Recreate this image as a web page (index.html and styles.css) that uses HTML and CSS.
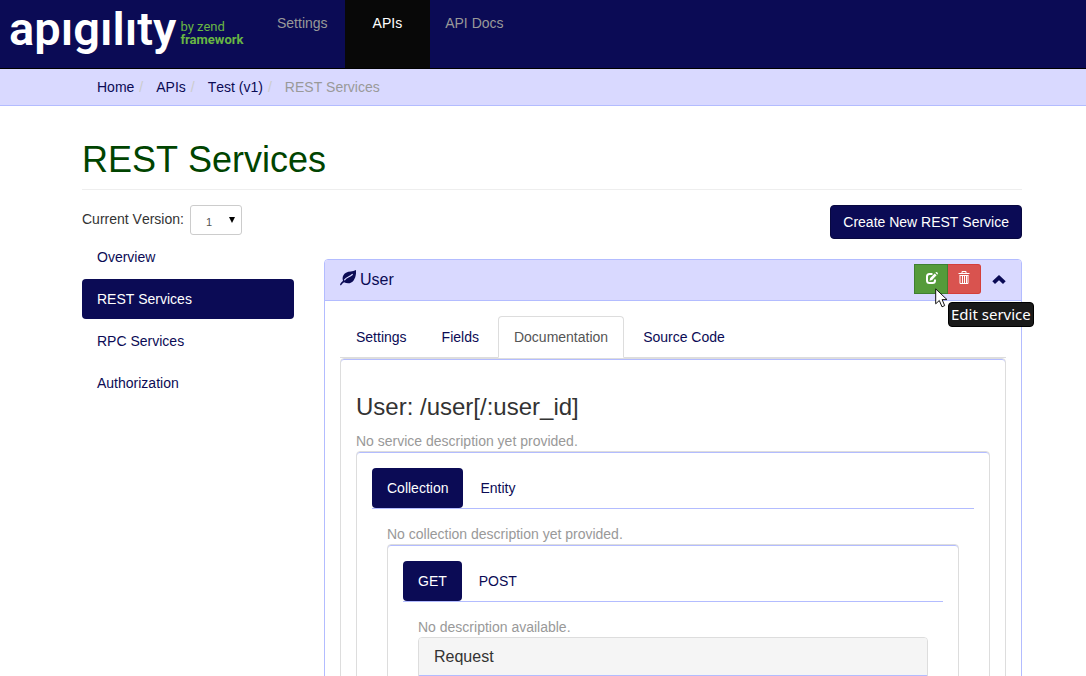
FILE: index.html
```html
<!DOCTYPE html>
<html lang="en">
<head>
<meta charset="utf-8">
<title>Apigility - REST Services</title>
<link rel="stylesheet" href="styles.css">
</head>
<body>
<header class="navbar">
  <a class="brand" href="#" aria-label="apigility by zend framework">
    <span class="brand-name">apıgılıty</span>
    <span class="brand-by"><span>by zend</span><strong>framework</strong></span>
  </a>
  <nav class="main-nav">
    <a href="#">Settings</a>
    <a class="active" href="#">APIs</a>
    <a href="#">API Docs</a>
  </nav>
</header>
<ol class="breadcrumb">
  <li><a href="#">Home</a></li>
  <li><a href="#">APIs</a></li>
  <li><a href="#">Test (v1)</a></li>
  <li class="current">REST Services</li>
</ol>
<main class="container">
  <h1>REST Services</h1>
  <div class="columns">
    <aside>
      <div class="version">
        <label for="version">Current Version:</label>
        <span class="select-wrap"><select id="version"><option>1</option></select></span>
      </div>
      <nav class="side-nav">
        <a href="#">Overview</a>
        <a class="active" href="#">REST Services</a>
        <a href="#">RPC Services</a>
        <a href="#">Authorization</a>
      </nav>
    </aside>
    <section class="services">
      <button class="create" type="button">Create New REST Service</button>
      <article class="service">
        <header class="service-head">
          <a class="service-name" href="#">
            <svg class="leaf" viewBox="0 0 16 16" aria-hidden="true"><path fill="currentColor" d="M16 0C12.500 1.800 9 1 6 2.700C3 4.400 1.900 7.500 3 10.800C1.700 12 .600 13.200 0 14.800L.800 15.600C1.600 14.300 2.700 13 4 12.200C7.500 14.200 11.500 13.500 13.600 10.500C15.700 7.500 16.300 4 16 0Z"/><path fill="none" stroke="#d9d9ff" stroke-width="1.200" stroke-linecap="round" d="M4.600 9.800C6.500 7 9.500 7.300 12.300 4.500"/></svg>
            User
          </a>
          <div class="actions">
            <button class="edit" type="button" aria-label="Edit service"><svg viewBox="0 0 13 13" aria-hidden="true"><path fill="none" stroke="currentColor" stroke-width="2" d="M7.500 2H4.500Q2 2 2 4.500V8.500Q2 11 4.500 11H7.500Q10 11 10 8.500V7.500"/><path fill="currentColor" d="M4.500 8.700L5.200 5.900L9.700 1.400L11.600 3.300L7.100 7.900ZM10.400.800L11.100.100Q13 .300 13 1.900L12.300 2.600Z"/></svg></button>
            <button class="delete" type="button" aria-label="Delete service"><svg viewBox="0 0 12 14" aria-hidden="true"><path fill="none" stroke="currentColor" d="M.500 2.500H11.500M4 2V.500H8V2M1.500 4.500H10.500M2 4.500V12.500H10V4.500M4.500 5V12M6.500 5V12M8.500 5V12"/></svg></button>
            <svg class="pointer" viewBox="0 0 13 20" aria-hidden="true"><path fill="#fff" stroke="#111" d="M.700.900V15.800L4.300 12.500L7 18.800L9.700 17.600L7.100 11.600H12Z"/></svg>
            <span class="tooltip" role="tooltip">Edit service</span>
          </div>
          <button class="collapse" type="button" aria-label="Collapse"><svg viewBox="0 0 14 10" aria-hidden="true"><path fill="currentColor" d="M7 0L13.700 6.300L11 9L7 5.200L3 9L.300 6.300Z"/></svg></button>
        </header>
        <div class="service-body">
          <nav class="tabs">
            <a href="#">Settings</a>
            <a href="#">Fields</a>
            <a class="active" href="#">Documentation</a>
            <a href="#">Source Code</a>
          </nav>
          <div class="panel">
            <h2>User: /user[/:user_id]</h2>
            <p>No service description yet provided.</p>
            <div class="panel">
              <nav class="pills">
                <a class="active" href="#">Collection</a>
                <a href="#">Entity</a>
              </nav>
              <div class="pane">
                <p>No collection description yet provided.</p>
                <div class="panel">
                  <nav class="pills">
                    <a class="active" href="#">GET</a>
                    <a href="#">POST</a>
                  </nav>
                  <div class="pane">
                    <p>No description available.</p>
                    <div class="request"><h3>Request</h3></div>
                  </div>
                </div>
              </div>
            </div>
          </div>
        </div>
      </article>
    </section>
  </div>
</main>
</body>
</html>
```
FILE: styles.css
```css
* { box-sizing: border-box; }
html { scrollbar-width: none; }
body {
  margin: 0;
  background: #fff;
  color: #333;
  font: 14px/20px "Liberation Sans", Arial, sans-serif;
  font-kerning: none;
}
a { color: #0b0b55; text-decoration: none; }
h1, h2, h3, p, ol { margin: 0; padding: 0; font-weight: 400; }
button, select { font: inherit; font-kerning: none; cursor: pointer; }
svg { display: block; }

.navbar {
  display: flex;
  height: 69px;
  background: #0b0b55;
  border-bottom: 1px solid #000;
}
.brand {
  display: flex;
  width: 262px;
  padding-left: 9px;
  gap: 4px;
  color: #fff;
}
.brand-name { font: 600 47px/58px Roboto, sans-serif; }
.brand-by {
  display: flex;
  flex-direction: column;
  padding-top: 20px;
  color: #68b643;
  font: 13px/13px Roboto, sans-serif;
}
.brand-by strong { font-weight: 700; }
.main-nav { display: flex; }
.main-nav a { padding: 13px 17px 0 15px; color: #999; }
.main-nav .active { padding: 13px 28px 0; background: #080808; color: #fff; }
.main-nav a:last-child { padding-right: 15px; }

.breadcrumb {
  display: flex;
  padding: 8px 97px;
  background: #d9d9ff;
  border-bottom: 1px solid #b3bcff;
  list-style: none;
}
.breadcrumb li + li::before { content: "/"; padding: 0 13px 0 5px; color: #ccc; }
.breadcrumb .current { color: #999; }

.container { padding: 34px 64px 0 82px; }
h1 {
  margin-bottom: 15px;
  padding-bottom: 9px;
  border-bottom: 1px solid #eee;
  color: #040;
  font-size: 36px;
  line-height: 40px;
}
.columns { display: grid; grid-template-columns: 212px minmax(0, 1fr); gap: 30px; }

.version { display: flex; gap: 6px; height: 32px; line-height: 28px; }
.select-wrap { position: relative; height: 30px; }
.select-wrap::after {
  content: "";
  position: absolute;
  top: 12px;
  right: 7px;
  border: solid transparent;
  border-width: 6px 3px 0;
  border-top-color: #000;
  pointer-events: none;
}
.version select {
  display: block;
  width: 52px;
  height: 30px;
  padding: 2px 15px 0;
  appearance: none;
  background: #fff;
  border: 1px solid #ccc;
  border-radius: 3px;
  color: #555;
  font-size: 11px;
}
.side-nav { display: grid; gap: 2px; }
.side-nav a { padding: 10px 15px; border-radius: 4px; }
.side-nav .active, .pills .active { background: #0b0b55; color: #fff; }

.services { display: flex; flex-direction: column; gap: 20px; }
.create {
  align-self: flex-end;
  padding: 6px 12px;
  background: #0b0b55;
  border: 1px solid #080840;
  border-radius: 4px;
  color: #fff;
}
.service { border: 1px solid #b3bcff; border-radius: 4px; }
.service-head {
  display: flex;
  align-items: center;
  height: 41px;
  padding: 0 15px;
  background: #d9d9ff;
  border-bottom: 1px solid #b3bcff;
  border-radius: 3px 3px 0 0;
}
.service-name { display: flex; gap: 4px; margin-right: auto; font-size: 16px; }
.leaf { width: 16px; height: 16px; }
.actions { position: relative; display: flex; margin-bottom: 3px; }
.actions button {
  display: grid;
  place-items: center;
  width: 34px;
  height: 30px;
  padding: 0;
  border: 1px solid #3f8030;
  background: #559b3a;
  color: #fff;
}
.actions .delete {
  width: 33px;
  padding-bottom: 2px;
  background: #d9534f;
  border-color: #d43f3a;
  border-left: 0;
  border-radius: 0 3px 3px 0;
}
.edit svg { width: 13px; height: 13px; }
.delete svg { width: 12px; height: 14px; }
.pointer { position: absolute; z-index: 2; left: 21px; top: 24px; width: 13px; height: 20px; }
.tooltip {
  position: absolute;
  z-index: 1;
  left: 34px;
  top: 38px;
  padding: 1px 2px;
  background: #1a1a1a;
  border: 1px solid #000;
  border-radius: 4px;
  color: #fff;
  font: 15px/21px "Noto Sans", sans-serif;
  white-space: nowrap;
}
.collapse { margin-left: 11px; padding: 0; border: 0; background: none; color: #0b0b55; }
.collapse svg { width: 14px; height: 10px; }
.service-body { padding: 15px; }

.tabs { display: flex; gap: 3px; border-bottom: 1px solid #ddd; }
.tabs a {
  margin-bottom: -1px;
  padding: 10px 15px;
  border: 1px solid transparent;
  border-radius: 4px 4px 0 0;
}
.tabs .active { background: #fff; border-color: #ddd; border-bottom-color: #fff; color: #555; }

.panel {
  padding: 16px 15px 15px;
  border: 1px solid #ddd;
  border-radius: 4px;
  box-shadow: inset 0 1px #b3bcff;
}
h2 { margin: 19px 0 11px; font-size: 24px; line-height: 26px; }
p { color: #999; }
.pills { display: flex; gap: 2px; border-bottom: 1px solid #b3bcff; }
.pills a { padding: 10px 15px; border-radius: 4px; }
.pane { padding: 15px; }
.request { border: 1px solid #ddd; border-radius: 4px 4px 0 0; }
h3 {
  padding: 10px 15px;
  background: #f5f5f5;
  border-bottom: 1px solid #b3bcff;
  border-radius: 3px 3px 0 0;
  font-size: 16px;
  line-height: 17px;
}
```
